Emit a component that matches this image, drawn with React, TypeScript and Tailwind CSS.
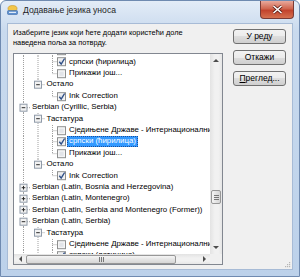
import React from "react";

type Row = {
  level: number;
  kind: "minus" | "plus" | "box";
  text: string;
  checked?: boolean;
  selected?: boolean;
  last?: boolean;
  anc?: boolean[];
};

const ROW_H = 11.4;
const CY = ROW_H / 2;
const cx = (level: number) => 9.5 + level * 14.5;

const rows: Row[] = [
  { level: 2, kind: "box", text: "Сједињене Државе - Интернационални", anc: [true, true] },
  { level: 2, kind: "box", checked: true, text: "српски (ћирилица)", anc: [true, true] },
  { level: 2, kind: "box", text: "Прикажи још...", last: true, anc: [true, true] },
  { level: 1, kind: "minus", text: "Остало", last: true, anc: [true] },
  { level: 2, kind: "box", checked: true, text: "Ink Correction", last: true, anc: [true, false] },
  { level: 0, kind: "minus", text: "Serbian (Cyrillic, Serbia)" },
  { level: 1, kind: "minus", text: "Тастатура", anc: [true] },
  { level: 2, kind: "box", text: "Сједињене Државе - Интернационални", anc: [true, true] },
  { level: 2, kind: "box", checked: true, selected: true, text: "српски (ћирилица)", anc: [true, true] },
  { level: 2, kind: "box", text: "Прикажи још...", last: true, anc: [true, true] },
  { level: 1, kind: "minus", text: "Остало", last: true, anc: [true] },
  { level: 2, kind: "box", checked: true, text: "Ink Correction", last: true, anc: [true, false] },
  { level: 0, kind: "plus", text: "Serbian (Latin, Bosnia and Herzegovina)" },
  { level: 0, kind: "plus", text: "Serbian (Latin, Montenegro)" },
  { level: 0, kind: "plus", text: "Serbian (Latin, Serbia and Montenegro (Former))" },
  { level: 0, kind: "minus", text: "Serbian (Latin, Serbia)" },
  { level: 1, kind: "minus", text: "Тастатура", anc: [true] },
  { level: 2, kind: "box", text: "Сједињене Државе - Интернационални", anc: [true, true] },
  { level: 2, kind: "box", checked: true, text: "српски (латиница)", anc: [true, true] },
];

const DOT = { stroke: "#a0a0a0", strokeWidth: 1, strokeDasharray: "1 1" };

function TreeGutter({ row }: { row: Row }) {
  const x = cx(row.level);
  const w = row.kind === "box" ? 53 : x + 6.5;
  const anc = row.anc ?? [];
  return (
    <svg width={w} height={ROW_H} className="shrink-0">
      {anc.map((on, k) =>
        on ? <line key={k} x1={cx(k)} y1={0} x2={cx(k)} y2={ROW_H} {...DOT} /> : null
      )}
      <line x1={x} y1={0} x2={x} y2={row.last ? CY : ROW_H} {...DOT} />
      {row.kind === "box" ? (
        <>
          <line x1={x} y1={CY} x2={x + 4.5} y2={CY} {...DOT} />
          <rect x={43.5} y={CY - 4} width={8} height={8} fill="#f4f4f4" stroke="#8e8f8f" />
          <rect x={45} y={CY - 2.5} width={5} height={5} fill="#e2e4e8" stroke="#f8f8f8" strokeWidth={0.6} />
          {row.checked && (
            <path
              d={`M45.3 ${CY} L47.2 ${CY + 2.4} L50.6 ${CY - 3.2}`}
              fill="none"
              stroke="#2f4f86"
              strokeWidth={1.4}
            />
          )}
        </>
      ) : (
        <>
          <line x1={x + 3.5} y1={CY} x2={x + 6.5} y2={CY} {...DOT} />
          <rect x={x - 3.5} y={CY - 3.5} width={7} height={7} fill="#f2f2f2" stroke="#8f9aa8" />
          <line x1={x - 1.8} y1={CY} x2={x + 1.8} y2={CY} stroke="#2b2b2b" />
          {row.kind === "plus" && <line x1={x} y1={CY - 1.8} x2={x} y2={CY + 1.8} stroke="#2b2b2b" />}
        </>
      )}
    </svg>
  );
}

function Arrow({ dir }: { dir: "up" | "down" | "left" | "right" }) {
  const pts = {
    up: "1,4 7,4 4,1",
    down: "1,1 7,1 4,4",
    left: "4,1 4,7 1,4",
    right: "1,1 1,7 4,4",
  }[dir];
  const vert = dir === "up" || dir === "down";
  return (
    <svg width={vert ? 8 : 5} height={vert ? 5 : 8}>
      <polygon points={pts} fill="#4d4d4d" />
    </svg>
  );
}

function Grip({ vertical }: { vertical?: boolean }) {
  return (
    <div className={vertical ? "flex flex-col gap-[1px]" : "flex gap-[1px]"}>
      {[0, 1, 2].map((i) => (
        <div key={i} className={vertical ? "h-[1px] w-[5px] bg-[#777]" : "w-[1px] h-[5px] bg-[#777]"} />
      ))}
    </div>
  );
}

function Button({ children }: { children: React.ReactNode }) {
  return (
    <div className="h-[15px] w-[53px] rounded-[3px] border border-[#707070] bg-[linear-gradient(#f2f2f2_0%,#ebebeb_50%,#dddddd_50%,#cfcfcf_100%)] flex items-center justify-center text-[8.5px] text-black">
      {children}
    </div>
  );
}

export default function App() {
  return (
    <div className="w-[300px] h-[277px] flex flex-col rounded-t-[6px] border border-[#6f8ab0] bg-[linear-gradient(#e3ecf7,#c9daee_30px,#bcd1ea)] font-['Liberation_Sans',Arial,sans-serif] overflow-hidden">
      {/* Title bar */}
      <div className="h-[22px] flex items-start shrink-0">
        <svg width="11" height="10" className="ml-[6px] mt-[4px]">
          <ellipse cx="5.5" cy="3.5" rx="4.5" ry="3" fill="#f3c64a" stroke="#c9951f" strokeWidth="0.6" />
          <rect x="0.5" y="5.5" width="10" height="4" rx="1" fill="#5d8fcf" stroke="#3a6aa8" strokeWidth="0.6" />
          <rect x="2" y="6.8" width="7" height="1.2" fill="#dfeaf7" />
        </svg>
        <span className="ml-[5px] mt-[4px] text-[8.6px] text-[#1e1e1e] leading-[10px]">Додавање језика уноса</span>
        <div className="ml-auto mr-[5px] h-[18px] w-[34px] rounded-b-[4px] border border-t-0 border-[#7a3a35] bg-[linear-gradient(#e9a99c,#d0664f_45%,#c2432d_55%,#d5704f)] flex items-center justify-center">
          <svg width="11" height="9">
            <path d="M1.5 1 L9.5 8 M9.5 1 L1.5 8" stroke="#5a1e18" strokeWidth="3" />
            <path d="M1.5 1 L9.5 8 M9.5 1 L1.5 8" stroke="#fff" strokeWidth="1.6" />
          </svg>
        </div>
      </div>

      {/* Client area */}
      <div className="relative flex-1 mx-[6px] mb-[6px] border border-[#a7bbd6] bg-[#f0f0f0] flex pl-[5px] pr-[6px]">
        <div className="flex flex-col">
          <p className="mt-[4px] text-[7.4px] leading-[10px] text-black whitespace-nowrap">
            Изаберите језик који ћете додати користећи доле
            <br />
            наведена поља за потврду.
          </p>
          <div className="mt-[5px] w-[210px] h-[212px] border border-[#828790] bg-white flex flex-col">
            <div className="flex flex-1 min-h-0">
              <div className="flex-1 overflow-hidden">
                <div className="mt-[-9px] text-[7.85px] text-black">
                  {rows.map((r, i) => (
                    <div key={i} className="h-[11.4px] flex items-center whitespace-nowrap">
                      <TreeGutter row={r} />
                      <span
                        className={
                          r.selected
                            ? "px-[1px] leading-[8.8px] border border-dotted border-[#1c4f9a] bg-[#3399ff] text-white"
                            : "px-[1px] leading-[8.8px] border border-transparent"
                        }
                      >
                        {r.text}
                      </span>
                    </div>
                  ))}
                </div>
              </div>
              {/* Vertical scrollbar */}
              <div className="w-[12px] flex flex-col bg-[linear-gradient(90deg,#e3e3e3,#f1f1f1_40%,#f1f1f1_70%,#e6e6e6)]">
                <div className="h-[13px] flex items-center justify-center">
                  <Arrow dir="up" />
                </div>
                <div className="flex-1">
                  <div className="mt-[123px] mx-auto w-[10px] h-[14px] rounded-[2px] border border-[#979797] bg-[linear-gradient(90deg,#f5f5f5,#e4e4e4_50%,#d6d6d6)] flex items-center justify-center">
                    <Grip vertical />
                  </div>
                </div>
                <div className="h-[13px] flex items-center justify-center">
                  <Arrow dir="down" />
                </div>
              </div>
            </div>
            {/* Horizontal scrollbar */}
            <div className="h-[10px] flex shrink-0">
              <div className="flex-1 flex bg-[linear-gradient(#e3e3e3,#f1f1f1_40%,#f1f1f1_70%,#e6e6e6)]">
                <div className="w-[12px] flex items-center justify-center">
                  <Arrow dir="left" />
                </div>
                <div className="flex-1 flex items-center">
                  <div className="w-[150px] h-[9px] rounded-[2px] border border-[#979797] bg-[linear-gradient(#f5f5f5,#e4e4e4_50%,#d6d6d6)] flex items-center justify-center">
                    <Grip />
                  </div>
                </div>
                <div className="w-[12px] flex items-center justify-center">
                  <Arrow dir="right" />
                </div>
              </div>
              <div className="w-[12px] bg-[#f0f0f0]" />
            </div>
          </div>
        </div>

        <div className="ml-auto mt-[5px] flex flex-col gap-[6px]">
          <Button>У реду</Button>
          <Button>Откажи</Button>
          <Button>
            <span>
              <span className="underline">П</span>реглед...
            </span>
          </Button>
        </div>

        <svg width="6" height="6" className="absolute right-[1px] bottom-[1px]">
          <rect x="4" y="0" width="1.2" height="1.2" fill="#b5b5b5" />
          <rect x="2" y="2" width="1.2" height="1.2" fill="#b5b5b5" />
          <rect x="4" y="2" width="1.2" height="1.2" fill="#b5b5b5" />
          <rect x="0" y="4" width="1.2" height="1.2" fill="#b5b5b5" />
          <rect x="2" y="4" width="1.2" height="1.2" fill="#b5b5b5" />
          <rect x="4" y="4" width="1.2" height="1.2" fill="#b5b5b5" />
        </svg>
      </div>
    </div>
  );
}
